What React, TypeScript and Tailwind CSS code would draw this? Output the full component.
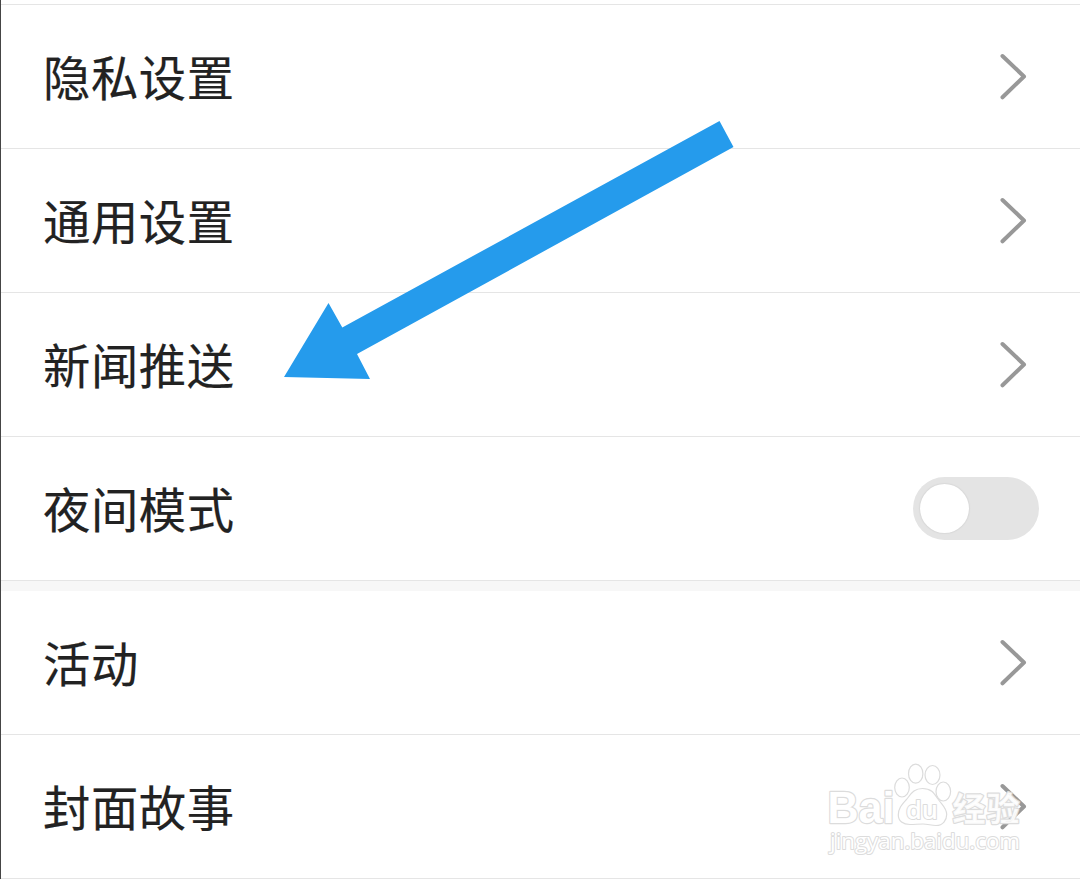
interface SettingRowProps {
  label: string;
  control?: 'arrow' | 'toggle';
}

function Chevron() {
  return (
    <svg className="w-[30px] h-[48px] mr-[52px] mb-0.5" viewBox="0 0 30 48" fill="none" aria-hidden="true">
      <path d="M4.500 4L26 24.500L4.500 45.300" stroke="#989898" strokeWidth={4} strokeLinecap="round" strokeLinejoin="round" />
    </svg>
  );
}

function Toggle() {
  return (
    <button
      className="w-[126px] h-[63px] mr-[41px] mb-px rounded-full bg-[#e4e4e4] flex items-center pl-[7px]"
      role="switch"
      aria-checked="false"
      aria-label="夜间模式"
    >
      <span className="w-[49px] h-[49px] rounded-full bg-white shadow-[0_0_2px_rgba(0,0,0,0.15)]" />
    </button>
  );
}

function SettingRow({ label, control = 'arrow' }: SettingRowProps) {
  return (
    <li className="h-36 flex items-center justify-between border-b border-[#e5e5e5] bg-white pl-[42px]">
      <span className="text-[47.3px] leading-[72px] tracking-[0.6px] mb-px text-[#222222] [-webkit-text-stroke:0.2px_#222222]">
        {label}
      </span>
      {control === 'toggle' ? <Toggle /> : <Chevron />}
    </li>
  );
}

// Outlined white logo with a faint grey edge
function Watermark() {
  return (
    <svg
      className="absolute left-[815px] top-[755px] w-[225px] h-[124px]"
      viewBox="0 0 225 124"
      fill="#ffffff"
      stroke="#dcdcdc"
      strokeWidth={1.2}
      strokeLinejoin="round"
      fontFamily="'Open Sans', sans-serif"
    >
      <g strokeWidth={2.4} paintOrder="stroke">
        <text x="12.500" y="68" fontSize="45" fontWeight="700" fontFamily="'Liberation Sans', sans-serif" textLength="67" lengthAdjust="spacingAndGlyphs">Bai</text>
        <text x="137.500" y="66" fontSize="33" fontWeight="700" textLength="67" fillOpacity={0.88} fontFamily="'Noto Sans CJK SC', sans-serif">经验</text>
      </g>
      <ellipse cx="87" cy="32.5" rx="7.3" ry="9.5" />
      <ellipse cx="100.7" cy="18.7" rx="7.2" ry="9.5" />
      <ellipse cx="117.5" cy="20" rx="7.5" ry="9.5" />
      <ellipse cx="128.3" cy="36.5" rx="7.3" ry="9.5" />
      <path d="M107.500 33.500C98 33.500 95.500 40 91 45C86.500 50 83.300 53.500 83.300 60C83.300 66 88 69.500 95 69.500C100 69.500 103 69 108 69C113 69 116 70.500 121 70.500C128 70.500 131.700 65 131.700 59.500C131.700 53 127 50 123 44C119 38 116.500 33.500 107.500 33.500Z" />
      <g strokeWidth={2} paintOrder="stroke">
        <text x="91" y="64" fontSize="25" fontWeight="600" textLength="32" lengthAdjust="spacingAndGlyphs">du</text>
        <text x="15" y="94" fontSize="22" fontWeight="500" textLength="190" lengthAdjust="spacingAndGlyphs">jingyan.baidu.com</text>
      </g>
    </svg>
  );
}

export default function App() {
  return (
    <main
      className="relative w-[1080px] h-[879px] overflow-hidden bg-white border-l border-[#454545] font-['Noto_Sans_CJK_SC',sans-serif]"
      lang="zh-CN"
    >
      <div className="h-[5px] border-b border-[#e5e5e5]" />
      <ul>
        <SettingRow label="隐私设置" />
        <SettingRow label="通用设置" />
        <SettingRow label="新闻推送" />
        <SettingRow label="夜间模式" control="toggle" />
      </ul>
      <div className="h-2.5 bg-[#f7f7f7]" />
      <ul>
        <SettingRow label="活动" />
        <SettingRow label="封面故事" />
      </ul>

      {/* Pointer to the news push row */}
      <svg className="absolute top-0 -left-px w-[1080px] h-[879px] pointer-events-none" viewBox="0 0 1080 879" aria-hidden="true">
        <path d="M284 377L328.500 303L342.300 327.500L719.500 121L733.500 147L357 354L370 379Z" fill="#259bec" />
      </svg>
      <div className="absolute top-0 -left-px pointer-events-none">
        <Watermark />
      </div>
    </main>
  );
}
